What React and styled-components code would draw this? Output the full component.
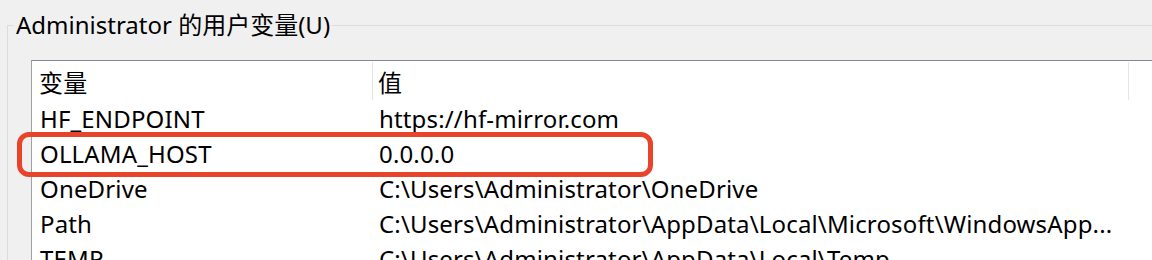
import * as React from "react"
import styled, { createGlobalStyle } from "styled-components"

const GlobalStyle = createGlobalStyle`
  html, body {
    margin: 0;
    padding: 0;
    background: #f0f0f0;
    overflow: hidden;
  }
  body {
    font-family: "Noto Sans", "Noto Sans CJK SC", sans-serif;
    color: #000;
  }
`

const Page = styled.div`
  width: 1152px;
  height: 260px;
  padding-top: 10px;
  box-sizing: border-box;
  overflow: hidden;
`

const GroupBox = styled.fieldset`
  margin: 0 0 0 7px;
  padding: 0;
  width: 1300px;
  height: 400px;
  border: 1px solid #dcdcdc;
  box-sizing: border-box;
`

const GroupTitle = styled.legend`
  margin-left: 6px;
  padding: 0 2px;
  font-size: 24px;
  line-height: 30px;
  white-space: nowrap;
`

const ListBox = styled.div`
  margin: 20px 0 0 23px;
  background: #fff;
  border-top: 1px solid #828790;
  border-left: 1px solid #a0a0a0;
  height: 400px;
`

const Columns = styled.div`
  display: grid;
  grid-template-columns: 341px 756px 1fr;
  font-size: 24px;
  letter-spacing: 0.15px;
`

const HeaderRow = styled(Columns)`
  padding: 1px 0;
  height: 40px;
  box-sizing: border-box;
`

const HeaderCell = styled.div`
  display: flex;
  align-items: center;
  padding-left: ${p => p.$indent}px;
  border-right: ${p => (p.$last ? "none" : "1px solid #e5e5e5")};
  font-family: "Noto Sans CJK SC", sans-serif;
`

const Row = styled(Columns)`
  position: relative;
  height: 35px;
  align-items: center;

  ${p => p.$marked && `
    &::before {
      content: "";
      position: absolute;
      left: -15px;
      top: -4px;
      width: 636px;
      height: 45px;
      border: 5px solid #e8442b;
      border-radius: 12px;
      box-sizing: border-box;
    }
  `}
`

const Cell = styled.div`
  padding-left: ${p => p.$indent}px;
  white-space: nowrap;
  line-height: 35px;
`

const variables = [
  { name: "HF_ENDPOINT", value: "https://hf-mirror.com" },
  { name: "OLLAMA_HOST", value: "0.0.0.0", marked: true },
  { name: "OneDrive", value: "C:\\Users\\Administrator\\OneDrive" },
  { name: "Path", value: "C:\\Users\\Administrator\\AppData\\Local\\Microsoft\\WindowsApp..." },
  { name: "TEMP", value: "C:\\Users\\Administrator\\AppData\\Local\\Temp" },
]

const App = () => {
  return (
    <Page>
      <GlobalStyle />
      <GroupBox>
        <GroupTitle>Administrator 的用户变量(U)</GroupTitle>
        <ListBox>
          <HeaderRow>
            <HeaderCell $indent={7}>变量</HeaderCell>
            <HeaderCell $indent={5}>值</HeaderCell>
            <HeaderCell $last />
          </HeaderRow>
          { variables.map(v => (
            <Row key={ v.name } $marked={ v.marked }>
              <Cell $indent={8}>{ v.name }</Cell>
              <Cell $indent={6}>{ v.value }</Cell>
              <Cell />
            </Row>
          )) }
        </ListBox>
      </GroupBox>
    </Page>
  )
}

export default App
